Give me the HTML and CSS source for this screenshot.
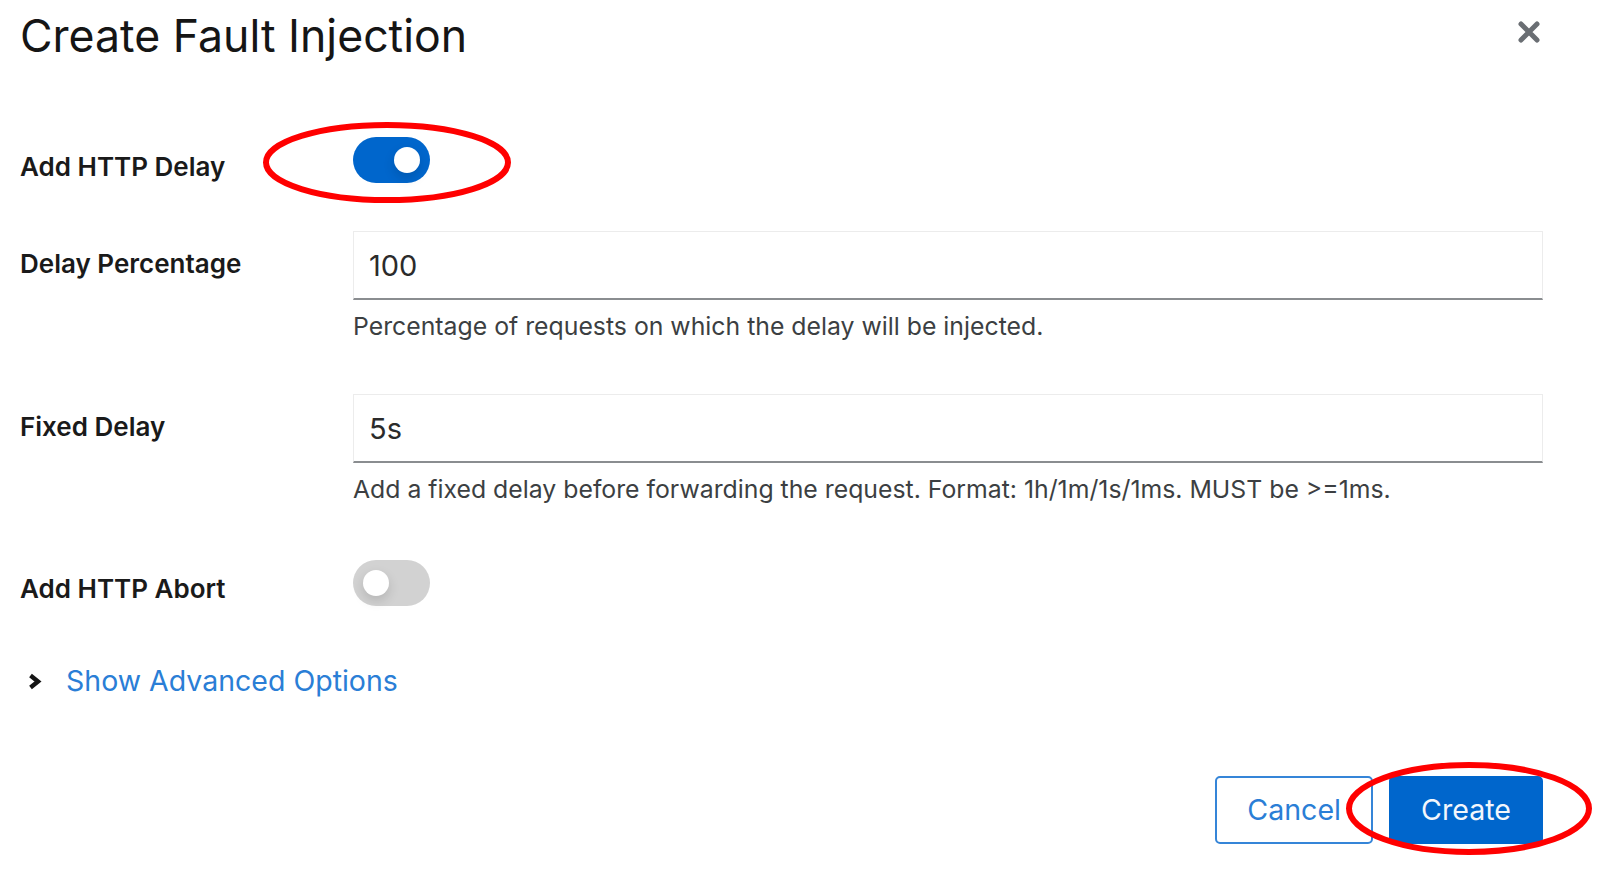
FILE: index.html
```html
<!DOCTYPE html>
<html lang="en">
<head>
<meta charset="utf-8">
<title>Create Fault Injection</title>
<link rel="stylesheet" href="styles.css">
</head>
<body>
<div class="modal">
  <header class="header">
    <h1 class="title">Create Fault Injection</h1>
    <button class="close" aria-label="Close">
      <svg width="24" height="24" viewBox="0 0 24 24"><path d="M4 4 L20 20 M20 4 L4 20" stroke="#6a6e73" stroke-width="5" stroke-linecap="round" fill="none"/></svg>
    </button>
  </header>

  <form class="form">
    <div class="group switch-row">
      <label class="label">Add HTTP Delay</label>
      <div class="field"><span class="switch on"><span class="knob"></span></span></div>
    </div>

    <div class="group input-row g2">
      <label class="label">Delay Percentage</label>
      <div class="field">
        <input class="input" type="text" value="100">
        <div class="help">Percentage of requests on which the delay will be injected.</div>
      </div>
    </div>

    <div class="group input-row g3">
      <label class="label">Fixed Delay</label>
      <div class="field">
        <input class="input" type="text" value="5s">
        <div class="help">Add a fixed delay before forwarding the request. Format: 1h/1m/1s/1ms. MUST be &gt;=1ms.</div>
      </div>
    </div>

    <div class="group switch-row g4">
      <label class="label">Add HTTP Abort</label>
      <div class="field"><span class="switch off"><span class="knob"></span></span></div>
    </div>

    <div class="expand">
      <svg class="chevron" width="15" height="17" viewBox="0 0 15 17"><path d="M3.5 2.5 L11 8.5 L3.5 14.5" stroke="#151515" stroke-width="4.4" fill="none" stroke-linejoin="miter"/></svg>
      <span class="expand-text">Show Advanced Options</span>
    </div>

    <div class="footer">
      <button type="button" class="btn secondary">Cancel</button>
      <button type="button" class="btn primary">Create</button>
    </div>
  </form>

  <svg class="annotations" width="1615" height="878" viewBox="0 0 1615 878">
    <ellipse cx="387" cy="162.5" rx="121" ry="37.5" fill="none" stroke="#ff0000" stroke-width="6"/>
    <ellipse cx="1469" cy="808.5" rx="120" ry="43.5" fill="none" stroke="#ff0000" stroke-width="6"/>
  </svg>
</div>
</body>
</html>
```
FILE: styles.css
```css
html, body {
  margin: 0;
  background: #ffffff;
}

body {
  font-family: Inter, "Noto Sans", sans-serif;
  color: #151515;
}

.modal {
  position: relative;
  width: 1615px;
  height: 878px;
  box-sizing: border-box;
  padding: 10px 72px 0 20px;
  overflow: hidden;
}

.header {
  display: flex;
  justify-content: space-between;
  align-items: flex-start;
}

.title {
  margin: 0;
  font-size: 44.6px;
  line-height: 52px;
  font-weight: 400;
  color: #151515;
}

.close {
  margin-top: 10px;
  margin-right: 2px;
  width: 24px;
  height: 24px;
  padding: 0;
  border: 0;
  background: none;
  display: flex;
}

.form {
  margin: 75px 0 0 0;
}

.group {
  display: grid;
  grid-template-columns: 333px 1fr;
  align-items: start;
}

.label {
  font-size: 26px;
  line-height: 36px;
  font-weight: 600;
  color: #1a1a1a;
}

.switch-row .label {
  padding-top: 12px;
}

.g4 .label {
  padding-top: 11px;
}

.input-row .label {
  padding-top: 15px;
}

.g2 { margin-top: 46px; }
.g3 { margin-top: 51px; }
.g4 { margin-top: 54px; }

.switch {
  width: 77px;
  height: 46px;
  border-radius: 23px;
  display: flex;
  align-items: center;
  padding: 0 10px;
  box-sizing: border-box;
}

.switch.on {
  background: #0066cc;
  justify-content: flex-end;
}

.switch.off {
  background: #d2d2d2;
  justify-content: flex-start;
}

.knob {
  width: 26px;
  height: 26px;
  border-radius: 50%;
  background: #ffffff;
  box-shadow: 0 5px 12px rgba(0, 0, 0, 0.14);
}

.input {
  display: block;
  width: 100%;
  height: 69px;
  box-sizing: border-box;
  margin: 0;
  border: 1px solid #ececec;
  border-bottom: 2px solid #8a8d90;
  padding: 0 15px;
  font-family: Inter, "Noto Sans", sans-serif;
  font-size: 29px;
  color: #2b2b2b;
  background: #ffffff;
  outline: none;
}

.help {
  margin-top: 9px;
  font-size: 24.8px;
  line-height: 34px;
  color: #3c3f42;
}

.expand {
  margin-top: 54px;
  display: flex;
  align-items: center;
  gap: 24px;
  padding-left: 7px;
  height: 40px;
}

.chevron {
  display: block;
}

.expand-text {
  font-size: 28.5px;
  line-height: 40px;
  color: #2a7ed6;
}

.footer {
  margin-top: 75px;
  display: flex;
  justify-content: flex-end;
  gap: 16px;
}

.btn {
  height: 68px;
  box-sizing: border-box;
  padding: 0 30px;
  border: 2px solid;
  border-radius: 5px;
  font-family: Inter, "Noto Sans", sans-serif;
  font-size: 28.6px;
  line-height: 64px;
  cursor: pointer;
}

.btn.secondary {
  background: #ffffff;
  color: #2a7ed6;
  border-color: #3585d8;
}

.btn.primary {
  background: #0066cc;
  color: #f2f6fc;
  border-color: #0066cc;
}

.annotations {
  position: absolute;
  top: 0;
  left: 0;
  pointer-events: none;
}
```
